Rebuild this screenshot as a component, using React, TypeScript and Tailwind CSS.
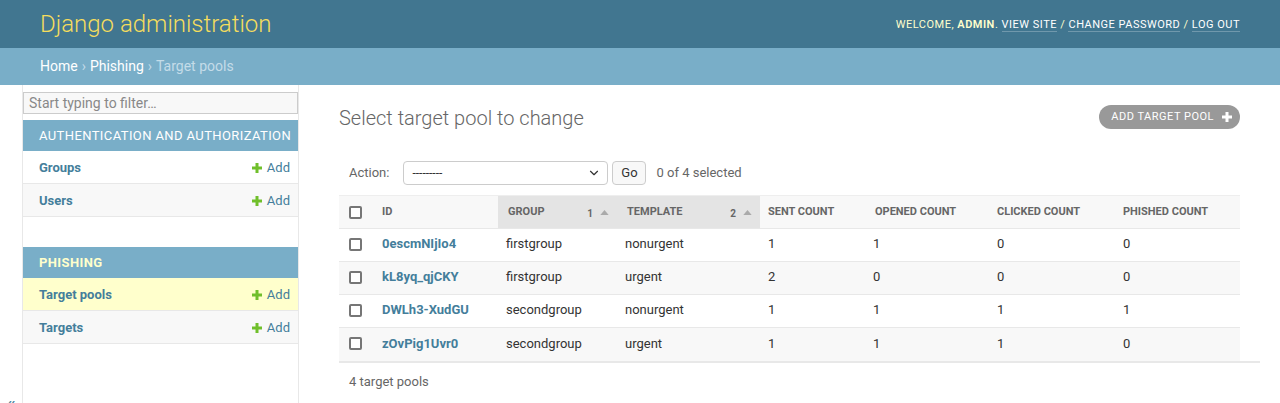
import { ChevronDown } from 'lucide-react';

const rows = [
    { id: '0escmNIjIo4', group: 'firstgroup', template: 'nonurgent', sent: 1, opened: 1, clicked: 0, phished: 0 },
    { id: 'kL8yq_qjCKY', group: 'firstgroup', template: 'urgent', sent: 2, opened: 0, clicked: 0, phished: 0 },
    { id: 'DWLh3-XudGU', group: 'secondgroup', template: 'nonurgent', sent: 1, opened: 1, clicked: 1, phished: 1 },
    { id: 'zOvPig1Uvr0', group: 'secondgroup', template: 'urgent', sent: 1, opened: 1, clicked: 1, phished: 0 },
];

function Plus({ className }: { className?: string }) {
    return (
        <svg viewBox="0 0 10 10" className={className} fill="currentColor">
            <path d="M3.5 0h3v3.5H10v3H6.5V10h-3V6.5H0v-3h3.5z" />
        </svg>
    );
}

function Checkbox() {
    return <span className="block w-[13px] h-[13px] border-2 border-[#767676] rounded-[2px] bg-white" />;
}

function SortMark({ n }: { n: number }) {
    return (
        <span className="flex items-center gap-[7px] text-[10px] text-[#666]">
            <span className="pt-[2px]">{n}</span>
            <svg viewBox="0 0 10 6" className="w-[9px] h-[5px]" fill="#aaa">
                <path d="M0 6 5 0l5 6z" />
            </svg>
        </span>
    );
}

function NavModule({ title, current, models }: { title: string; current?: boolean; models: { name: string; active?: boolean }[] }) {
    return (
        <div className="mb-[30px]">
            <div className={`h-[31px] bg-[#79aec8] px-4 flex items-center whitespace-nowrap text-[13px] tracking-[0.4px] uppercase ${current ? 'text-[#ffc] font-bold' : 'text-white'}`}>
                {title}
            </div>
            {models.map((m, i) => (
                <div
                    key={m.name}
                    className={`h-[33px] pt-[1px] border-b border-[#e8e8e8] flex items-center justify-between pl-4 pr-2 text-[13px] ${m.active ? 'bg-[#ffffcc]' : i % 2 ? 'bg-[#f8f8f8]' : 'bg-white'}`}
                >
                    <span className="font-bold text-[#447e9b]">{m.name}</span>
                    <span className="flex items-center gap-[5px] text-[#447e9b]">
                        <Plus className="w-[10px] h-[10px] text-[#70bf2b]" />
                        Add
                    </span>
                </div>
            ))}
        </div>
    );
}

export default function App() {
    return (
        <div className="h-[403px] overflow-hidden bg-white text-[#333] font-['Roboto','Liberation_Sans',sans-serif]">
            {/* header */}
            <div className="h-[48px] bg-[#417690] px-10 flex items-center justify-between">
                <div className="text-[24px] font-light text-[#f5dd5d]">Django administration</div>
                <div className="text-[11px] tracking-[0.5px] uppercase text-[#ffc] pt-[2px]">
                    Welcome, <strong className="font-semibold">admin</strong>.{' '}
                    <span className="text-white border-b border-white/25">View site</span> /{' '}
                    <span className="text-white border-b border-white/25">Change password</span> /{' '}
                    <span className="text-white border-b border-white/25">Log out</span>
                </div>
            </div>

            {/* breadcrumbs */}
            <div className="h-[37px] bg-[#79aec8] px-10 flex items-center text-[14px] text-[#c4dce8]">
                <span className="text-white">Home</span>
                <span className="mx-[4px]">›</span>
                <span className="text-white">Phishing</span>
                <span className="mx-[4px]">›</span>
                <span>Target pools</span>
            </div>

            <div className="flex h-[318px]">
                {/* sidebar toggle */}
                <div className="w-[23px] shrink-0 border-r border-[#e8e8e8] pt-[309px] text-center text-[20px] text-[#447e9b] leading-none">
                    «
                </div>

                {/* nav sidebar */}
                <div className="w-[276px] shrink-0 border-r border-[#e8e8e8]">
                    <div className="mt-[7px] mb-[6px] h-[22px] border border-[#ccc] bg-[#f8f8f8] px-[5px] flex items-center text-[14px] text-[#888]">
                        Start typing to filter…
                    </div>
                    <NavModule
                        title="Authentication and Authorization"
                        models={[{ name: 'Groups' }, { name: 'Users' }]}
                    />
                    <NavModule
                        title="Phishing"
                        current
                        models={[{ name: 'Target pools', active: true }, { name: 'Targets' }]}
                    />
                </div>

                {/* content */}
                <div className="flex-1 pl-10 pr-10 pt-[20px]">
                    <div className="flex items-start justify-between">
                        <h1 className="text-[20px] font-light text-[#666] leading-[26px]">Select target pool to change</h1>
                        <div className="h-[24px] rounded-full bg-[#999] pl-3 pr-[8px] flex items-center gap-[8px] text-[11px] tracking-[0.5px] uppercase text-white">
                            ADD TARGET POOL
                            <Plus className="w-[10px] h-[10px]" />
                        </div>
                    </div>

                    {/* actions */}
                    <div className="mt-[30px] px-[10px] h-[24px] flex items-center text-[13px] text-[#666]">
                        <span>Action:</span>
                        <div className="ml-[14px] w-[205px] h-[24px] border border-[#ccc] rounded-[4px] flex items-center justify-between pl-[8px] pr-[6px] text-[#333]">
                            <span className="text-[12px] leading-none">---------</span>
                            <ChevronDown className="w-[14px] h-[14px] text-[#333]" strokeWidth={2} />
                        </div>
                        <div className="ml-[4px] h-[24px] w-[34px] justify-center border border-[#ccc] rounded-[4px] bg-[#f8f8f8] flex items-center text-[#333]">Go</div>
                        <span className="ml-[10px]">0 of 4 selected</span>
                    </div>

                    {/* results */}
                    <table className="mt-[10px] w-full table-fixed border-collapse text-[13px]">
                        <thead>
                            <tr className="h-[33px] bg-[#f8f8f8] border-t border-[#eee] text-[11px] font-bold uppercase text-[#666] text-left">
                                <th className="w-[35px] pl-[10px]"><Checkbox /></th>
                                <th className="w-[124px] pl-2 font-bold">ID</th>
                                <th className="w-[119px] bg-[#e4e4e4] pl-[10px] pr-[8px] font-bold">
                                    <div className="flex items-center justify-between">GROUP<SortMark n={1} /></div>
                                </th>
                                <th className="w-[143px] bg-[#e4e4e4] pl-[10px] pr-[8px] font-bold">
                                    <div className="flex items-center justify-between">TEMPLATE<SortMark n={2} /></div>
                                </th>
                                <th className="w-[105px] pl-2 font-bold">Sent count</th>
                                <th className="w-[124px] pl-[10px] font-bold">Opened count</th>
                                <th className="w-[126px] pl-2 font-bold">Clicked count</th>
                                <th className="pl-2 font-bold">Phished count</th>
                            </tr>
                        </thead>
                        <tbody>
                            {rows.map((r, i) => (
                                <tr key={r.id} className={`h-[33px] border-t border-[#e8e8e8] ${i % 2 ? 'bg-[#f8f8f8]' : 'bg-white'}`}>
                                    <td className="pl-[10px] pb-[2px]"><Checkbox /></td>
                                    <td className="pl-2 pb-[2px] font-bold text-[#447e9b]">{r.id}</td>
                                    <td className="pl-2 pb-[2px]">{r.group}</td>
                                    <td className="pl-2 pb-[2px]">{r.template}</td>
                                    <td className="pl-2 pb-[2px]">{r.sent}</td>
                                    <td className="pl-2 pb-[2px]">{r.opened}</td>
                                    <td className="pl-2 pb-[2px]">{r.clicked}</td>
                                    <td className="pl-2 pb-[2px]">{r.phished}</td>
                                </tr>
                            ))}
                        </tbody>
                    </table>

                    <div className="-mr-5 border-t-2 border-[#e8e8e8] pt-[9px] pl-[10px] text-[13px] text-[#666]">
                        4 target pools
                    </div>
                </div>
            </div>
        </div>
    );
}
